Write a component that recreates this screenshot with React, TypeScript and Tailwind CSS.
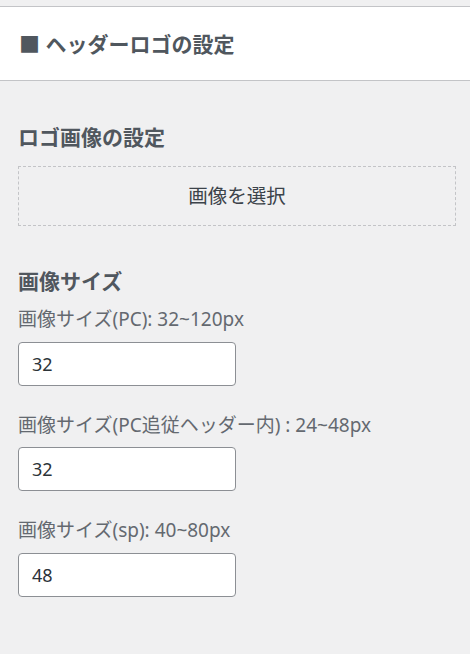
import React from 'react';

const fontStack = "font-['Noto_Sans','Noto_Sans_CJK_JP',sans-serif]";

const sizeFields = [
  { label: '画像サイズ(PC): 32~120px', value: '32' },
  { label: '画像サイズ(PC追従ヘッダー内) : 24~48px', value: '32' },
  { label: '画像サイズ(sp): 40~80px', value: '48' },
];

export default function App() {
  return (
    <div className={`min-h-[654px] w-[470px] bg-[#f0f0f1] pt-[6px] ${fontStack}`}>
      <div className="flex h-[75px] items-center border-y border-[#c3c4c7] bg-white px-[19px]">
        <h2 className="text-[21px] font-bold leading-7 text-[#50575e]">■ ヘッダーロゴの設定</h2>
      </div>

      <div className="pl-[18px] pr-[14px] pt-[42px] pb-10">
        <h3 className="text-[21px] font-bold leading-7 text-[#50575e]">ロゴ画像の設定</h3>
        <button className="mt-[15px] flex h-[60px] w-full items-center justify-center border border-dashed border-[#c3c4c7] text-[19.5px] text-[#3c434a]">
          画像を選択
        </button>

        <h3 className="mt-[41px] text-[21px] font-bold leading-7 text-[#50575e]">画像サイズ</h3>
        <div className="mt-[11px] flex flex-col gap-[26px]">
          {sizeFields.map((f) => (
            <div key={f.label} className="flex flex-col gap-[9.5px]">
              <label className="text-[19px] leading-[26px] text-[#646970]">{f.label}</label>
              <input
                type="text"
                defaultValue={f.value}
                className="h-[44px] w-[218px] rounded-[4px] border border-[#8c8f94] bg-white px-[13px] text-[18px] text-[#2c3338] outline-none"
              />
            </div>
          ))}
        </div>
      </div>
    </div>
  );
}
